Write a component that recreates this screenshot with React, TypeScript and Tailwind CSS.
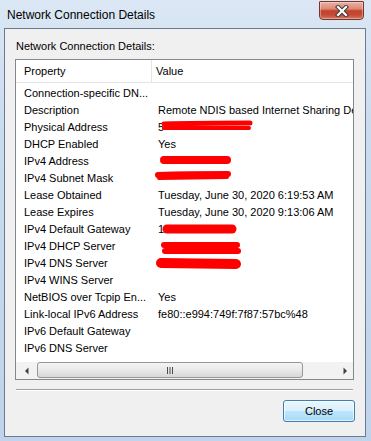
import React from "react";

const rows: [string, string][] = [
  ["Connection-specific DN...", ""],
  ["Description", "Remote NDIS based Internet Sharing Device"],
  ["Physical Address", "5"],
  ["DHCP Enabled", "Yes"],
  ["IPv4 Address", ""],
  ["IPv4 Subnet Mask", ""],
  ["Lease Obtained", "Tuesday, June 30, 2020 6:19:53 AM"],
  ["Lease Expires", "Tuesday, June 30, 2020 9:13:06 AM"],
  ["IPv4 Default Gateway", "1"],
  ["IPv4 DHCP Server", ""],
  ["IPv4 DNS Server", ""],
  ["IPv4 WINS Server", ""],
  ["NetBIOS over Tcpip En...", "Yes"],
  ["Link-local IPv6 Address", "fe80::e994:749f:7f87:57bc%48"],
  ["IPv6 Default Gateway", ""],
  ["IPv6 DNS Server", ""],
];

export default function App() {
  return (
    <div className="w-[371px] h-[441px] overflow-hidden bg-[linear-gradient(180deg,#dbe7f4_0%,#c9dbee_30%,#bfd3ea_100%)] font-['Liberation_Sans',Arial,sans-serif] text-black">
      {/* title bar */}
      <div className="h-[28px] flex items-start justify-between pl-[7px] pr-[7px]">
        <div className="mt-[7px] text-[12px] leading-[16px] text-black">Network Connection Details</div>
        <div className="mt-[1px] w-[45px] h-[19px] rounded-b-[4px] rounded-t-[1px] border border-[#7a3326] bg-[linear-gradient(180deg,#eab1a3_0%,#dc8a77_40%,#c6412c_52%,#c24a36_75%,#d5775f_100%)] shadow-[inset_0_0_0_1px_rgba(255,255,255,0.35)] flex items-center justify-center">
          <svg width="14" height="12" viewBox="0 0 14 12">
            <path d="M3 2 L11 10 M11 2 L3 10" stroke="#3a3a3a" strokeWidth="4.2" strokeLinecap="square" />
            <path d="M3 2 L11 10 M11 2 L3 10" stroke="#ffffff" strokeWidth="2.2" strokeLinecap="square" />
          </svg>
        </div>
      </div>

      {/* client area */}
      <div className="ml-[4px] w-[362px] h-[409px] border border-[#6a7b91] bg-[#f0f0f0] flex flex-col">
        <div className="pl-[11px] pt-[10px] text-[11px] leading-[14px]">Network Connection Details:</div>

        {/* list view */}
        <div className="ml-[10px] mt-[6px] w-[339px] h-[321px] border border-[#828790] bg-white flex flex-col text-[11px]">
          {/* header */}
          <div className="h-[23px] flex border-b border-[#e5e5e5] shrink-0">
            <div className="w-[136px] pl-[8px] flex items-center border-r border-[#e5e5e5]">Property</div>
            <div className="flex-1 pl-[4px] flex items-center">Value</div>
          </div>

          {/* rows */}
          <div className="relative h-[279px] pt-[2px] overflow-hidden">
            {rows.map(([p, v], i) => (
              <div key={i} className="h-[17px] flex items-center leading-[17px] whitespace-nowrap">
                <div className="w-[137px] pl-[8px] overflow-hidden">{p}</div>
                <div className="flex-1 pl-[5px] overflow-hidden">{v}</div>
              </div>
            ))}
            <svg className="absolute left-0 top-0" width="337" height="279" viewBox="0 0 337 279">
              <g stroke="#ff0000" strokeLinecap="round" fill="none">
                <path d="M148 41 C180 40 210 40 234 40" strokeWidth="5" />
                <path d="M148 45 L233 45" strokeWidth="4" />
                <path d="M148 77 L211 77" strokeWidth="8" />
                <path d="M142 92 C170 91 200 91 212 91" strokeWidth="6" />
                <path d="M143 95 L211 94" strokeWidth="4" />
                <path d="M151 146 L216 146" strokeWidth="9" />
                <path d="M148 162 L221 162" strokeWidth="6" />
                <path d="M149 168 L222 168" strokeWidth="6" />
                <path d="M145 180 L220 181" strokeWidth="10" />
              </g>
            </svg>
          </div>

          {/* horizontal scrollbar */}
          <div className="h-[17px] flex bg-[#f2f2f2] shrink-0">
            <div className="w-[21px] flex items-center justify-center">
              <svg width="6" height="8" viewBox="0 0 6 8">
                <path d="M4.5 0.5 L4.5 7.5 L1 4 Z" fill="#404040" />
              </svg>
            </div>
            <div className="w-[266px] h-[16px] rounded-[3px] border border-[#979797] bg-[linear-gradient(180deg,#f4f4f4_0%,#e9e9e9_50%,#d7d7d7_100%)] flex items-center justify-center">
              <svg width="8" height="7" viewBox="0 0 8 7">
                <path d="M1.5 0 L1.5 7 M4 0 L4 7 M6.5 0 L6.5 7" stroke="#4a4a4a" strokeWidth="1" />
              </svg>
            </div>
            <div className="flex-1" />
            <div className="w-[17px] flex items-center justify-center">
              <svg width="6" height="8" viewBox="0 0 6 8">
                <path d="M1.5 0.5 L1.5 7.5 L5 4 Z" fill="#404040" />
              </svg>
            </div>
          </div>
        </div>

        {/* separator */}
        <div className="ml-[11px] mt-[9px] w-[337px] h-[2px] border-t border-[#a0a0a0] border-b border-b-white" />

        {/* close button */}
        <div className="mt-[9px] flex justify-end pr-[10px]">
          <div className="w-[72px] h-[22px] rounded-[3px] border border-[#3c7fb1] bg-[linear-gradient(180deg,#eaf6fd_0%,#d9f0fc_50%,#bee6fd_51%,#a7d9f5_100%)] shadow-[inset_0_0_0_1px_rgba(255,255,255,0.7)] flex items-center justify-center text-[11px]">
            Close
          </div>
        </div>
      </div>
    </div>
  );
}
